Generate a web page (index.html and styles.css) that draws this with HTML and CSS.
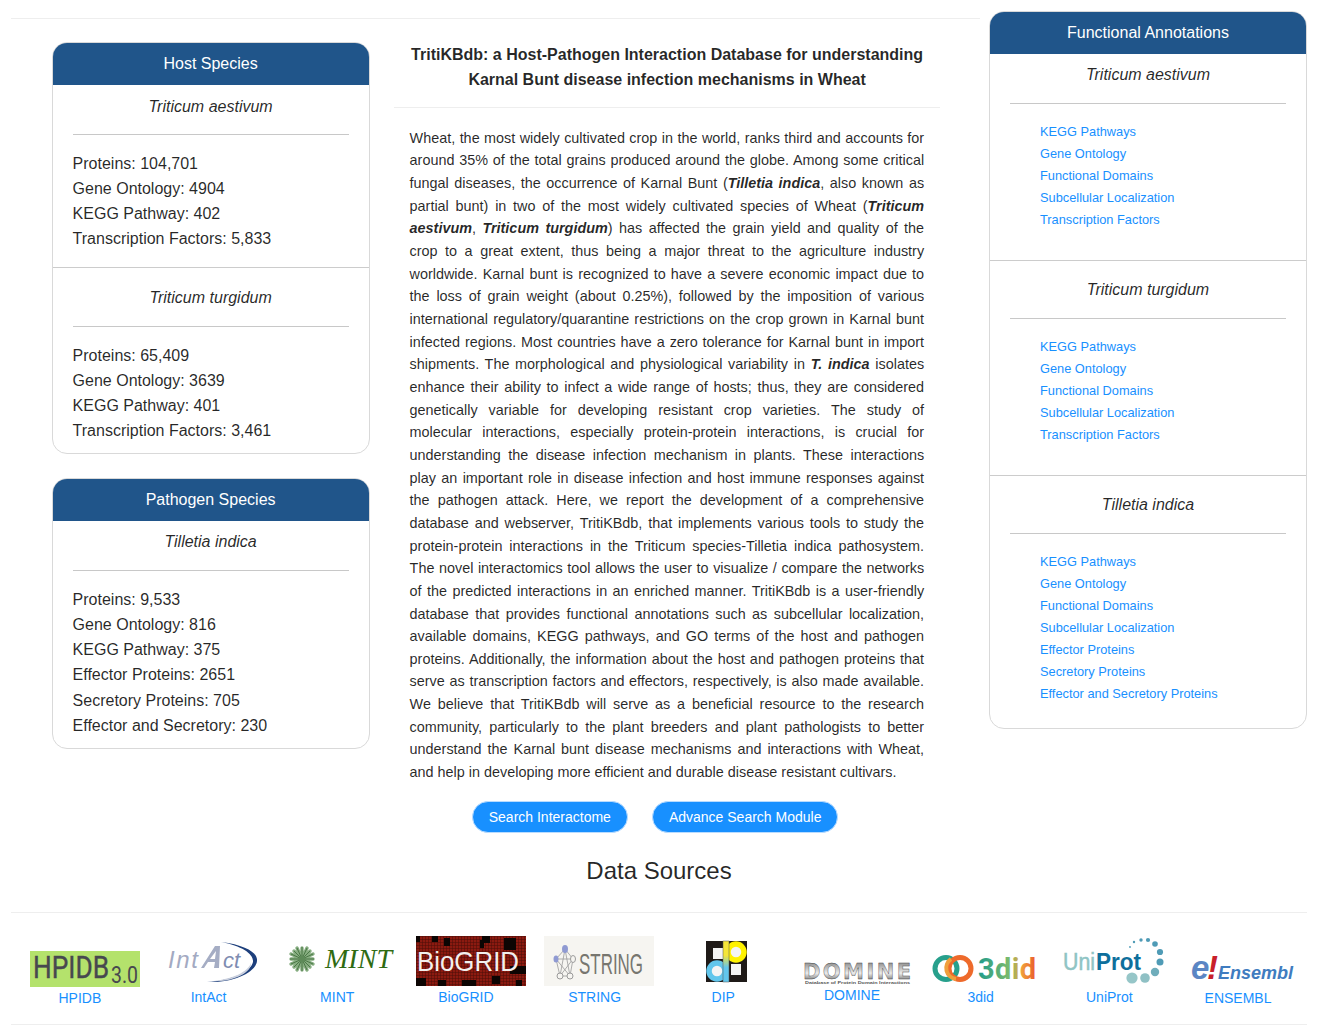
FILE: index.html
```html
<!DOCTYPE html>
<html lang="en">
<head>
  <meta charset="UTF-8">
  <title>TritiKBdb</title>
  <link rel="stylesheet" href="styles.css">
</head>
<body>
  <div class="page">
    <div class="top">
      <div class="main">
        <hr class="rule">
        <div class="main-row">
          <aside class="side">
            <section class="card">
              <h3 class="card-head">Host Species</h3>
              <div class="sect first">
                <div class="sp">Triticum aestivum</div>
                <hr class="sp-rule">
                <p class="stat">Proteins: 104,701</p>
                <p class="stat">Gene Ontology: 4904</p>
                <p class="stat">KEGG Pathway: 402</p>
                <p class="stat">Transcription Factors: 5,833</p>
              </div>
              <div class="sect">
                <div class="sp">Triticum turgidum</div>
                <hr class="sp-rule">
                <p class="stat">Proteins: 65,409</p>
                <p class="stat">Gene Ontology: 3639</p>
                <p class="stat">KEGG Pathway: 401</p>
                <p class="stat">Transcription Factors: 3,461</p>
              </div>
            </section>
            <section class="card pathogen">
              <h3 class="card-head">Pathogen Species</h3>
              <div class="sect first">
                <div class="sp">Tilletia indica</div>
                <hr class="sp-rule">
                <p class="stat">Proteins: 9,533</p>
                <p class="stat">Gene Ontology: 816</p>
                <p class="stat">KEGG Pathway: 375</p>
                <p class="stat">Effector Proteins: 2651</p>
                <p class="stat">Secretory Proteins: 705</p>
                <p class="stat">Effector and Secretory: 230</p>
              </div>
            </section>
          </aside>
          <main class="center">
            <h1 class="title">TritiKBdb: a Host-Pathogen Interaction Database for understanding<br>Karnal Bunt disease infection mechanisms in Wheat</h1>
            <hr class="rule">
            <p class="intro">Wheat, the most widely cultivated crop in the world, ranks third and accounts for around 35% of the total grains produced around the globe. Among some critical fungal diseases, the occurrence of Karnal Bunt (<em class="name">Tilletia indica</em>, also known as partial bunt) in two of the most widely cultivated species of Wheat (<em class="name">Triticum aestivum</em>, <em class="name">Triticum turgidum</em>) has affected the grain yield and quality of the crop to a great extent, thus being a major threat to the agriculture industry worldwide. Karnal bunt is recognized to have a severe economic impact due to the loss of grain weight (about 0.25%), followed by the imposition of various international regulatory/quarantine restrictions on the crop grown in Karnal bunt infected regions. Most countries have a zero tolerance for Karnal bunt in import shipments. The morphological and physiological variability in <em class="name">T. indica</em> isolates enhance their ability to infect a wide range of hosts; thus, they are considered genetically variable for developing resistant crop varieties. The study of molecular interactions, especially protein-protein interactions, is crucial for understanding the disease infection mechanism in plants. These interactions play an important role in disease infection and host immune responses against the pathogen attack. Here, we report the development of a comprehensive database and webserver, TritiKBdb, that implements various tools to study the protein-protein interactions in the Triticum species-Tilletia indica pathosystem. The novel interactomics tool allows the user to visualize / compare the networks of the predicted interactions in an enriched manner. TritiKBdb is a user-friendly database that provides functional annotations such as subcellular localization, available domains, KEGG pathways, and GO terms of the host and pathogen proteins. Additionally, the information about the host and pathogen proteins that serve as transcription factors and effectors, respectively, is also made available. We believe that TritiKBdb will serve as a beneficial resource to the research community, particularly to the plant breeders and plant pathologists to better understand the Karnal bunt disease mechanisms and interactions with Wheat, and help in developing more efficient and durable disease resistant cultivars.</p>
            <div class="btn-row">
              <a class="btn" href="#">Search Interactome</a>
              <a class="btn" href="#">Advance Search Module</a>
            </div>
          </main>
        </div>
      </div>
      <aside class="right">
        <section class="card">
          <h3 class="card-head">Functional Annotations</h3>
          <div class="sect first">
            <div class="sp">Triticum aestivum</div>
            <hr class="sp-rule">
            <ul class="links">
              <li><a href="#">KEGG Pathways</a></li>
              <li><a href="#">Gene Ontology</a></li>
              <li><a href="#">Functional Domains</a></li>
              <li><a href="#">Subcellular Localization</a></li>
              <li><a href="#">Transcription Factors</a></li>
            </ul>
          </div>
          <div class="sect">
            <div class="sp">Triticum turgidum</div>
            <hr class="sp-rule">
            <ul class="links">
              <li><a href="#">KEGG Pathways</a></li>
              <li><a href="#">Gene Ontology</a></li>
              <li><a href="#">Functional Domains</a></li>
              <li><a href="#">Subcellular Localization</a></li>
              <li><a href="#">Transcription Factors</a></li>
            </ul>
          </div>
          <div class="sect last">
            <div class="sp">Tilletia indica</div>
            <hr class="sp-rule">
            <ul class="links">
              <li><a href="#">KEGG Pathways</a></li>
              <li><a href="#">Gene Ontology</a></li>
              <li><a href="#">Functional Domains</a></li>
              <li><a href="#">Subcellular Localization</a></li>
              <li><a href="#">Effector Proteins</a></li>
              <li><a href="#">Secretory Proteins</a></li>
              <li><a href="#">Effector and Secretory Proteins</a></li>
            </ul>
          </div>
        </section>
      </aside>
    </div>

    <footer class="sources">
      <h2 class="sources-title">Data Sources</h2>
      <hr class="rule">
      <div class="logos">
        <a class="logo" href="#">
          <svg width="110" height="51" viewBox="0 0 110 51">
            <rect y="15" width="110" height="36" fill="#b4e26c"/>
            <text x="3" y="42" class="l-cond" font-size="32" fill="#47484f" stroke="#47484f" stroke-width="0.4" textLength="76" lengthAdjust="spacingAndGlyphs">HPIDB</text>
            <text x="81" y="47" class="l-cond" font-size="23" fill="#47484f" textLength="27" lengthAdjust="spacingAndGlyphs">3.0</text>
          </svg>
          <span>HPIDB</span>
        </a>
        <a class="logo" href="#">
          <svg width="110" height="50" viewBox="0 0 110 50">
            <path d="M63 6C88 9 100 17 99 25C98 36 76 47 49 46C72 45 93 36 95 26C96 18 84 10 63 6Z" fill="#1d3f7c"/>
            <path d="M56 45C74 43 90 36 93 27C94 36 76 46 56 45Z" fill="#c9cfdd"/>
            <text x="10" y="32" class="l-sans" font-style="italic" font-size="24" fill="#a3aac2" textLength="30" lengthAdjust="spacing">Int</text>
            <path d="M43 32L57 10H62L61 32H56L57 26H50L46 32ZM52 23H57L58 15Z" fill="#a5adc4" fill-rule="evenodd"/>
            <text x="65" y="32" class="l-sans" font-style="italic" font-size="22" fill="#7f8db2" textLength="17" lengthAdjust="spacing">ct</text>
          </svg>
          <span>IntAct</span>
        </a>
        <a class="logo" href="#">
          <svg width="110" height="50" viewBox="0 0 110 50">
            <g stroke="#86ad80" stroke-width="3.4" stroke-linecap="round">
              <path d="M15 12V34M4 23H26M7 15L23 31M23 15L7 31M10 12L20 34M20 12L10 34M4 18L26 28M26 18L4 28"/>
            </g>
            <g stroke="#43703f" stroke-width="0.9">
              <path d="M15 11V35M3 23H27M7 15L23 31M23 15L7 31M10 12L20 34M20 12L10 34M4 18L26 28M26 18L4 28"/>
            </g>
            <circle cx="15" cy="23" r="3.5" fill="#5d8a58"/>
            <text x="38" y="32" class="l-serif" font-style="italic" font-size="27" fill="#2f6b12" textLength="67" lengthAdjust="spacingAndGlyphs">MINT</text>
          </svg>
          <span>MINT</span>
        </a>
        <a class="logo" href="#">
          <svg width="110" height="50" viewBox="0 0 110 50">
            <defs>
              <pattern id="gridcell" width="3" height="3" patternUnits="userSpaceOnUse">
                <rect width="3" height="3" fill="#8c1a10"/>
                <path d="M0 0H3M0 0V3" stroke="#4a0d08" stroke-width="1"/>
              </pattern>
            </defs>
            <rect width="110" height="50" fill="url(#gridcell)"/>
            <path d="M0 0H4V6H0ZM16 0H22V6H16ZM28 2H34V10H28ZM66 0H74V7H66ZM88 2H100V14H88ZM94 30H110V38H94ZM0 42H10V50H0ZM22 44H30V50H22ZM46 44H60V50H46ZM76 40H84V48H76ZM100 44H106V50H100ZM64 4H68V12H64Z" fill="#0c0503"/>
            <text x="1" y="35" class="l-sans" font-size="28" fill="#f2f0ee" textLength="102" lengthAdjust="spacingAndGlyphs">BioGRID</text>
          </svg>
          <span>BioGRID</span>
        </a>
        <a class="logo" href="#">
          <svg width="110" height="50" viewBox="0 0 110 50">
            <rect width="110" height="50" fill="#f6f5f1"/>
            <g stroke="#9b9b9b" stroke-width="0.8" fill="none">
              <path d="M21 13L12 23L16 40H26L29 23ZM21 13L16 40M21 13L26 40M12 23H29M12 23L26 40M29 23L16 40"/>
            </g>
            <ellipse cx="21" cy="13" rx="3" ry="4" fill="#8f9ad2"/>
            <ellipse cx="12" cy="23" rx="2.5" ry="3.5" fill="#8f9ad2"/>
            <ellipse cx="29" cy="23" rx="2.5" ry="3.5" fill="#f6f5f1" stroke="#9b9b9b"/>
            <circle cx="16" cy="40" r="3" fill="#f6f5f1" stroke="#9b9b9b"/>
            <circle cx="26" cy="40" r="3" fill="#f6f5f1" stroke="#9b9b9b"/>
            <text x="35" y="38" class="l-sans" font-size="30" fill="#77766f" textLength="64" lengthAdjust="spacingAndGlyphs">STRING</text>
          </svg>
          <span>STRING</span>
        </a>
        <a class="logo" href="#">
          <svg width="110" height="50" viewBox="0 0 110 50">
            <defs>
              <linearGradient id="dipbar" x1="0" y1="0" x2="0" y2="1">
                <stop offset="0.35" stop-color="#f5e53a"/>
                <stop offset="0.65" stop-color="#62c6ec"/>
              </linearGradient>
            </defs>
            <rect x="33" y="5" width="41" height="41" fill="#1f1a18"/>
            <rect x="40" y="12" width="10" height="11" fill="#f4f4f4"/>
            <rect x="58" y="28" width="10" height="11" fill="#f4f4f4"/>
            <circle cx="63" cy="16" r="8" fill="#f4f4f4" stroke="#fff200" stroke-width="5.5"/>
            <circle cx="44" cy="35" r="8" fill="#f4f4f4" stroke="#62c6ec" stroke-width="5.5"/>
            <rect x="50" y="5" width="6" height="41" fill="url(#dipbar)" stroke="#555" stroke-width="0.5"/>
          </svg>
          <span>DIP</span>
        </a>
        <a class="logo" href="#">
          <svg width="110" height="48" viewBox="0 0 110 48">
            <defs>
              <linearGradient id="domfill" x1="0" y1="0" x2="0" y2="1">
                <stop offset="0" stop-color="#7a7a7a"/>
                <stop offset="0.55" stop-color="#ececec"/>
                <stop offset="1" stop-color="#3f3f3f"/>
              </linearGradient>
            </defs>
            <text x="1" y="43" class="l-deja" font-weight="bold" font-size="21" fill="url(#domfill)" stroke="#444" stroke-width="0.4" textLength="108" lengthAdjust="spacing">DOMINE</text>
            <text x="3" y="47.5" class="l-sans" font-weight="bold" font-size="4.4" fill="#555" textLength="105" lengthAdjust="spacingAndGlyphs">Database of Protein Domain Interactions</text>
          </svg>
          <span>DOMINE</span>
        </a>
        <a class="logo" href="#">
          <svg width="110" height="50" viewBox="0 0 110 50">
            <defs>
              <linearGradient id="didfill" x1="48" y1="0" x2="106" y2="0" gradientUnits="userSpaceOnUse">
                <stop offset="0" stop-color="#1f9b8b"/>
                <stop offset="0.55" stop-color="#7dbb6b"/>
                <stop offset="0.75" stop-color="#f0a03c"/>
                <stop offset="1" stop-color="#ea5b2c"/>
              </linearGradient>
            </defs>
            <circle cx="16" cy="32.5" r="11" fill="none" stroke="#27a08c" stroke-width="5"/>
            <circle cx="30" cy="32.5" r="11" fill="none" stroke="#ee6a2b" stroke-width="5"/>
            <path d="M21 23A11 11 0 0 0 26 43" fill="none" stroke="#f0a03c" stroke-width="4"/>
            <text x="48" y="43" class="l-cond" font-weight="700" font-size="29" fill="url(#didfill)" textLength="58" lengthAdjust="spacing">3did</text>
          </svg>
          <span>3did</span>
        </a>
        <a class="logo" href="#">
          <svg width="110" height="50" viewBox="0 0 110 50">
            <text x="4" y="34" class="l-sans" font-size="23" fill="#8fc4c4" stroke="#8fc4c4" stroke-width="0.5" textLength="32" lengthAdjust="spacingAndGlyphs">Uni</text>
            <text x="37" y="34" class="l-sans" font-weight="bold" font-size="23" fill="#0e6f9c" textLength="45" lengthAdjust="spacingAndGlyphs">Prot</text>
            <g fill="#4f9bb6">
              <circle cx="71" cy="11" r="0.9"/>
              <circle cx="75" cy="6" r="1.2"/>
              <circle cx="82" cy="4" r="1.7"/>
              <circle cx="89" cy="4" r="2.1"/>
              <circle cx="96" cy="8" r="2.8"/>
              <circle cx="101" cy="16" r="3.1"/>
              <circle cx="101" cy="26" r="3.5"/>
            </g>
            <circle cx="96" cy="36" r="4.2" fill="#6fadbb"/>
            <circle cx="86" cy="42" r="4.8" fill="#8fc0c4"/>
            <circle cx="73" cy="42" r="5.6" fill="#96c6c8"/>
          </svg>
          <span>UniProt</span>
        </a>
        <a class="logo" href="#">
          <svg width="110" height="51" viewBox="0 0 110 51">
            <text x="3" y="43" class="l-sans" font-weight="bold" font-style="italic" font-size="33" fill="#5b86c4">e</text>
            <text x="19" y="43" class="l-sans" font-weight="bold" font-style="italic" font-size="33" fill="#c8202a">!</text>
            <text x="30" y="43" class="l-sans" font-weight="bold" font-style="italic" font-size="18" fill="#3f7cc0" textLength="75" lengthAdjust="spacingAndGlyphs">Ensembl</text>
          </svg>
          <span>ENSEMBL</span>
        </a>
      </div>
      <hr class="rule">
    </footer>
  </div>
</body>
</html>
```

FILE: styles.css
```css
body {
  margin: 0;
  background: #fff;
  color: rgba(0, 0, 0, 0.85);
  font-family: 'Liberation Sans', Arial, sans-serif;
  font-size: 16px;
  text-rendering: optimizeLegibility;
}
a {
  color: #1890ff;
  text-decoration: none;
}
.page {
  padding: 0 26px 0 11px;
}
.rule {
  margin: 0;
  border: 0;
  border-top: 1px solid #eee;
}
.top {
  display: flex;
  gap: 9px;
  align-items: flex-start;
}
.main {
  width: 969px;
  padding-top: 18px;
  flex: none;
}
.main-row {
  display: flex;
  gap: 24px;
  padding: 23px 39.4px 0 40.6px;
}
.side {
  width: 318px;
  flex: none;
  display: flex;
  flex-direction: column;
  gap: 24px;
}
.center {
  width: 547px;
  flex: none;
}
.right {
  width: 318px;
  flex: none;
  padding-top: 11px;
}

.card {
  border: 1px solid #d9d9d9;
  border-radius: 15px;
  overflow: hidden;
}
.card-head {
  margin: 0;
  background: #20558a;
  color: #fff;
  font-size: 16px;
  font-weight: normal;
  line-height: 42px;
  text-align: center;
}
.sect {
  padding: 17px 20px 9.6px;
  border-top: 1px solid #ccc;
}
.sect.first {
  padding-top: 8.6px;
  padding-bottom: 15.6px;
  border-top: 0;
}
.pathogen .sect.first {
  padding-top: 8px;
  padding-bottom: 10px;
}
.sp {
  font-style: italic;
  line-height: 25.2px;
  text-align: center;
}
.sp-rule {
  margin: 15.4px 0 16px;
  border: 0;
  border-top: 1px solid #c8c8c8;
}
.sect.first .sp-rule {
  margin-bottom: 15.4px;
}
.pathogen .sect.first .sp-rule {
  margin-top: 16px;
  margin-bottom: 15.6px;
}
.stat {
  margin: 0;
  line-height: 25.2px;
}

.right .sect {
  padding-top: 16px;
  padding-bottom: 29px;
}
.right .sect.first {
  padding-top: 8px;
  padding-bottom: 29px;
}
.right .sect.last {
  padding-top: 15.6px;
  padding-bottom: 23px;
}
.right .sect .sp-rule {
  margin: 16px 0 17px;
}
.links {
  margin: 0;
  padding: 0 0 0 30px;
  list-style: none;
  font-size: 12.8px;
  line-height: 22px;
}

.title {
  margin: 0;
  padding-bottom: 15px;
  font-size: 16px;
  line-height: 25.2px;
  text-align: center;
}
.center > .rule {
  margin-right: 1px;
}
.intro {
  margin: 0;
  padding: 18.32px 16.5px 0 16px;
  font-size: 14.4px;
  line-height: 22.65px;
  text-align: justify;
}
.name {
  font-style: italic;
  font-weight: bold;
}
.btn-row {
  display: flex;
  justify-content: center;
  gap: 24px;
  padding: 17.1px 24px 0 0;
}
.btn {
  padding: 0 16px;
  border: 1px solid #b9dcff;
  border-radius: 32px;
  background: #1890ff;
  color: #fff;
  font-size: 14px;
  line-height: 30px;
}

.sources-title {
  margin: 0;
  padding: 21.6px 0 24px;
  font-size: 24px;
  font-weight: normal;
  line-height: 34px;
  text-align: center;
}
.logos {
  display: grid;
  grid-template-columns: repeat(10, 128.7px);
  align-items: start;
  padding: 23px 0 0 4.5px;
  height: 88px;
}
.logo {
  display: block;
  font-size: 14px;
  line-height: 22px;
  text-align: center;
}
.logo svg {
  display: block;
  margin-left: 14px;
  overflow: visible;
}
.logo span {
  display: block;
}
.l-sans {
  font-family: 'Liberation Sans', Arial, sans-serif;
}
.l-cond {
  font-family: 'Roboto', 'Liberation Sans', sans-serif;
}
.l-serif {
  font-family: 'Liberation Serif', serif;
}
.l-deja {
  font-family: 'DejaVu Sans', sans-serif;
}
```
